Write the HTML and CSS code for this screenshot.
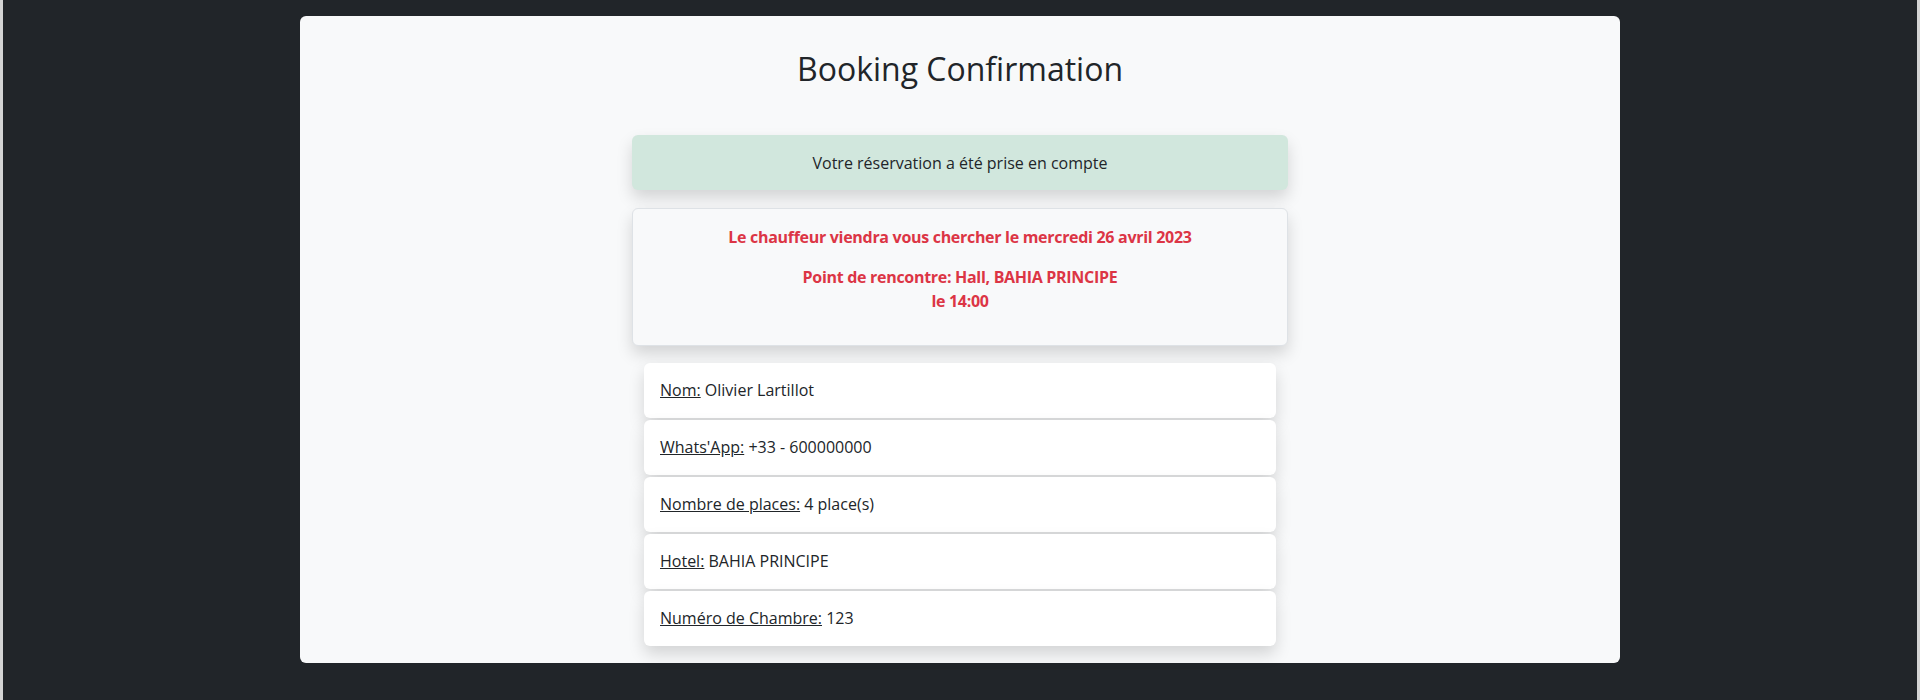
FILE: index.html
```html
<!DOCTYPE html>
<html lang="fr">
<head>
    <meta charset="UTF-8">
    <meta name="viewport" content="width=device-width, initial-scale=1.0">
    <title>Booking Confirmation</title>
    <link rel="stylesheet" href="styles.css">
</head>
<body>
    <div class="page">
        <div class="card-main">
            <h2 class="title">Booking Confirmation</h2>

            <div class="column">
                <!-- Alert -->
                <div class="alert-success">
                    Votre réservation a été prise en compte
                </div>

                <!-- Infos chauffeur -->
                <div class="pickup-card">
                    <p>Le chauffeur viendra vous chercher le mercredi 26 avril 2023</p>
                    <p>Point de rencontre: Hall, BAHIA PRINCIPE<br>le 14:00</p>
                </div>

                <!-- Details -->
                <ul class="details">
                    <li class="details-item"><u>Nom:</u> Olivier Lartillot</li>
                    <li class="details-item"><u>Whats'App:</u> +33 - 600000000</li>
                    <li class="details-item"><u>Nombre de places:</u> 4 place(s)</li>
                    <li class="details-item"><u>Hotel:</u> BAHIA PRINCIPE</li>
                    <li class="details-item"><u>Numéro de Chambre:</u> 123</li>
                </ul>
            </div>
        </div>
    </div>
</body>
</html>
```

FILE: styles.css
```css
* {
    margin: 0;
    padding: 0;
    box-sizing: border-box;
}

html, body {
    height: 100%;
}

body {
    font-family: 'Segoe UI', 'Open Sans', 'Noto Sans', sans-serif;
    font-size: 16px;
    line-height: 1.5;
    color: #212529;
    background: #212529;
    border-left: 3px solid #d4d4d4;
    border-right: 3px solid #d4d4d4;
}

.page {
    padding-top: 16px;
}

.card-main {
    width: 1320px;
    margin: 0 auto;
    background: #f8f9fa;
    border-radius: 6px;
    padding: 34px 0 17px;
}

.title {
    font-size: 32px;
    font-weight: 500;
    line-height: 1.2;
    text-align: center;
    margin-bottom: 47px;
}

.column {
    width: 656px;
    margin: 0 auto;
}

.alert-success {
    background: #d1e7dd;
    border-radius: 6px;
    padding: 16px;
    height: 55px;
    text-align: center;
    box-shadow: 0 8px 16px rgba(0, 0, 0, 0.15);
    margin-bottom: 18px;
}

.pickup-card {
    background: #f8f9fa;
    border: 1px solid #dee2e6;
    border-radius: 6px;
    padding: 16px;
    text-align: center;
    color: #dc3545;
    font-weight: bold;
    letter-spacing: -0.3px;
    box-shadow: 0 8px 16px rgba(0, 0, 0, 0.15);
    margin-bottom: 17px;
}

.pickup-card p {
    margin-bottom: 16px;
}

.details {
    list-style: none;
    margin: 0 12px;
    display: flex;
    flex-direction: column;
    gap: 2px;
}

.details-item {
    background: #fff;
    border-radius: 6px;
    height: 55px;
    padding: 15px 16px;
    line-height: 24px;
    box-shadow: 0 8px 16px rgba(0, 0, 0, 0.15);
}
```
